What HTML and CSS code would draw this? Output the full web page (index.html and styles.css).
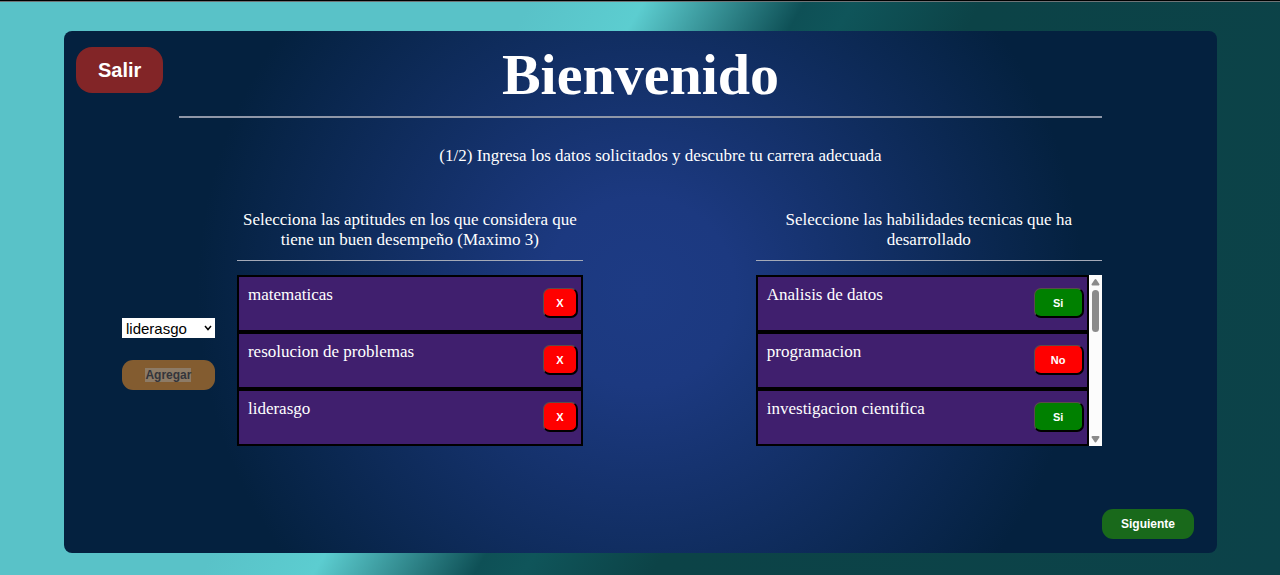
FILE: index.html
```html
<!DOCTYPE html>
<html lang="es">
<head>
<meta charset="utf-8">
<meta name="viewport" content="width=device-width, initial-scale=1">
<title>Bienvenido</title>
<link rel="stylesheet" href="styles.css">
</head>
<body>
<main class="card">
  <header class="header">
    <button class="exit" type="button">Salir</button>
    <h1 class="title">Bienvenido</h1>
  </header>
  <p class="intro">(1/2) Ingresa los datos solicitados y descubre tu carrera adecuada</p>
  <div class="content">
    <form class="picker">
      <div class="picker-field">
        <select class="picker-select" aria-label="Aptitud">
          <option>liderasgo</option>
        </select>
        <svg class="picker-chevron" viewBox="0 0 8 6" aria-hidden="true"><path d="M1 1L4 4.500L7 1"/></svg>
      </div>
      <button class="picker-add" type="button" disabled><span class="picker-text">Agregar</span></button>
    </form>
    <section class="column skills">
      <h2 class="subtitle">Selecciona las aptitudes en los que considera que tiene un buen desempeño (Maximo 3)</h2>
      <ul class="list">
        <li class="row">matematicas<button class="tag remove" type="button">X</button></li>
        <li class="row">resolucion de problemas<button class="tag remove" type="button">X</button></li>
        <li class="row">liderasgo<button class="tag remove" type="button">X</button></li>
      </ul>
    </section>
    <section class="column technical">
      <h2 class="subtitle">Seleccione las habilidades tecnicas que ha desarrollado</h2>
      <div class="scroller">
        <ul class="list">
          <li class="row">Analisis de datos<button class="tag yes" type="button">Si</button></li>
          <li class="row">programacion<button class="tag no" type="button">No</button></li>
          <li class="row">investigacion cientifica<button class="tag yes" type="button">Si</button></li>
        </ul>
        <div class="scrollbar" aria-hidden="true">
          <svg class="arrow" viewBox="0 0 13 14"><path d="M6.500 5L9.500 9.500H3.500Z"/></svg>
          <span class="thumb"></span>
          <svg class="arrow" viewBox="0 0 13 14"><path d="M3.500 5H9.500L6.500 9.500Z"/></svg>
        </div>
      </div>
    </section>
  </div>
  <footer class="footer">
    <button class="next" type="button">Siguiente</button>
  </footer>
</main>
</body>
</html>
```
FILE: styles.css
```css
* {
  box-sizing: border-box;
}

body {
  margin: 0;
  min-height: 100vh;
  padding: 30px 63px 22px 64px;
  border-top: 1px solid #000;
  box-shadow: inset 0 1px #6f7477;
  background: linear-gradient(120deg, #59c2c8 0%, #59c2c8 33%, #5ccdd0 40%, #0e5056 50%, #0f555a 53%, #0c4347 61%, #0c4249 100%);
  color: #fff;
  font-family: "Liberation Serif", "Times New Roman", serif;
  font-size: 17px;
  line-height: 20px;
}

button {
  font-family: "Liberation Sans", Arial, sans-serif;
  font-size: 12px;
  font-weight: bold;
  color: #fff;
}

.card {
  display: flex;
  flex-direction: column;
  min-height: calc(100vh - 53px);
  border-radius: 8px;
  background: radial-gradient(circle, #1d3b84 0%, #1c3980 15%, #04213f 70%);
}

.header {
  display: grid;
  grid-template-columns: 10% 80% 10%;
  align-items: start;
}

.exit {
  justify-self: start;
  margin: 16px 0 0 12px;
  padding: 0 22px;
  height: 46px;
  border: 0;
  border-radius: 16px;
  background: #822527;
  font-size: 20px;
}

.title {
  margin: 0;
  padding: 12px 0 10px;
  border-bottom: 2px solid #8f97a8;
  font-size: 58px;
  line-height: 63px;
  text-align: center;
}

.intro {
  margin: 28px 0 44px;
  padding-left: 40px;
  text-align: center;
}

.content {
  display: grid;
  grid-template-columns: 15% 30% 15% 30% 10%;
}

.picker {
  display: flex;
  flex-direction: column;
  align-items: stretch;
  gap: 22px;
  padding: 108px 22px 0 58px;
}

.picker-field {
  display: grid;
  align-items: center;
}

.picker-select {
  grid-area: 1 / 1;
  width: 100%;
  height: 20px;
  padding: 0 4px;
  appearance: none;
  border: 0;
  border-radius: 0;
  background: #fff;
  color: #000;
  font-family: "Liberation Sans", Arial, sans-serif;
  font-size: 15px;
}

.picker-chevron {
  grid-area: 1 / 1;
  justify-self: end;
  width: 8px;
  height: 6px;
  margin-right: 3px;
  fill: none;
  stroke: #000;
  stroke-width: 1.5;
  pointer-events: none;
}

.picker-add {
  height: 30px;
  padding: 0;
  border: 0;
  border-radius: 11px;
  background: #835c30;
}

.picker-text {
  background: #8d7b66;
  color: #34353b;
}

.technical {
  grid-column: 4;
}

.subtitle {
  margin: 0 0 14px;
  padding-bottom: 10px;
  border-bottom: 1px solid #a4aab8;
  font-size: 17px;
  font-weight: normal;
  text-align: center;
}

.list {
  flex: 1;
  margin: 0;
  padding: 0;
  list-style: none;
}

.row {
  display: flex;
  justify-content: space-between;
  height: 57px;
  padding: 8px 3px 0 9px;
  border: 2px solid #000;
  background: #401f6e;
}

.tag {
  height: 30px;
  margin-top: 3px;
  padding: 0;
  border: 1px solid;
  border-width: 1px 2px 2px 1px;
  border-color: #5b4b4b #000 #000 #5b4b4b;
  border-radius: 7px;
  font-size: 11px;
}

.remove {
  width: 35px;
  background: #f00;
}

.yes {
  width: 50px;
  background: #008000;
}

.no {
  width: 50px;
  background: #f00;
}

.scroller {
  display: flex;
}

.scrollbar {
  display: flex;
  flex-direction: column;
  align-items: center;
  width: 13px;
  background: #fcfcfc;
}

.arrow {
  width: 13px;
  height: 14px;
  fill: #8b8b8b;
  stroke: #8b8b8b;
  stroke-width: 2;
  stroke-linejoin: round;
}

.thumb {
  width: 7px;
  height: 42px;
  margin: 1px 0 auto;
  border-radius: 4px;
  background: #8b8b8b;
}

.footer {
  display: flex;
  justify-content: flex-end;
  margin-top: auto;
  padding: 20px 23px 14px;
}

.next {
  width: 92px;
  height: 30px;
  padding: 0;
  border: 0;
  border-radius: 11px;
  background: #19691b;
}
```
